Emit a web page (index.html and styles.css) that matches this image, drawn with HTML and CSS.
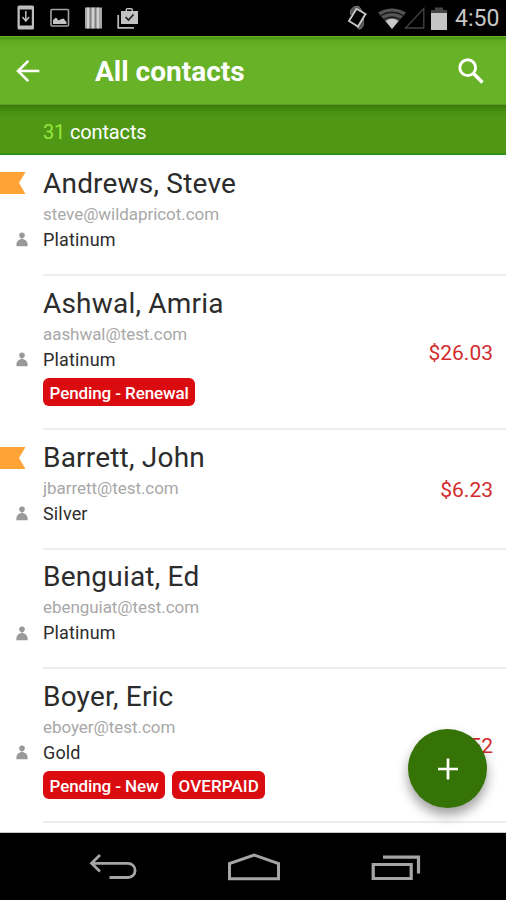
FILE: index.html
```html
<!DOCTYPE html>
<html lang="en">
<head>
<meta charset="utf-8">
<title>All contacts</title>
<link rel="stylesheet" href="styles.css">
</head>
<body>
<svg class="defs" aria-hidden="true">
  <symbol id="member" viewBox="0 0 12 15"><circle cx="6" cy="3.200" r="2.800"/><path d="M.4 14.200v-2.200Q1 8.500 4.200 7.600L5.300 6.500h1.400l1.100 1.100Q11 8.500 11.600 12v2.200z"/></symbol>
  <symbol id="flag" viewBox="0 0 26 22"><path d="M0 0h25.500l-6.500 11 6.500 11H0z"/></symbol>
</svg>
<div class="screen">
  <header class="status">
    <div class="notices">
      <svg width="18" height="26" viewBox="0 0 18 26"><path fill="#bdbdbd" fill-rule="evenodd" d="M2 0.500h13.500a1.500 1.500 0 0 1 1.500 1.500v21a1.500 1.500 0 0 1-1.500 1.500H2A1.500 1.500 0 0 1 .5 23V2A1.500 1.500 0 0 1 2 .5zM2.800 4.500v16h12v-16z"/><path d="M8.800 6v9M5.500 12l3.300 4 3.300-4" fill="none" stroke="#bdbdbd" stroke-width="1.500"/></svg>
      <svg width="20" height="20" viewBox="0 0 20 20"><rect x="1" y="1.500" width="17.500" height="16.500" rx="1" fill="none" stroke="#a2a2a2" stroke-width="1.600"/><path fill="#c4c4c4" d="M3 16v-4l3-2.500 2.500 3 3-1.500 2-.5 3 3.500v2z"/></svg>
      <svg width="17" height="22" viewBox="0 0 17 22"><path fill="#a6a6a6" d="M0 .5h17v21H0z"/><path d="M3 .5v21M8 .5v21M13 .5v21" stroke="#d0d0d0" stroke-width="2"/><path d="M5.500.5v21M10.500.5v21" stroke="#777" stroke-width=".8"/></svg>
      <svg width="22" height="21" viewBox="0 0 22 21"><path d="M1.200 7v12.800H17" fill="none" stroke="#b5b5b5" stroke-width="1.800"/><path fill="#c2c2c2" fill-rule="evenodd" d="M4 3h4.500V2A2 2 0 0 1 10.500 0h3.500a2 2 0 0 1 2 2v1h5v13H4zM10 3h4.500V1.500H10z"/><path d="M8.500 9l3 3 5-5.500" fill="none" stroke="#222" stroke-width="1.700"/></svg>
    </div>
    <div class="signals">
      <svg class="rotate" width="22" height="26" viewBox="0 0 22 26"><path d="M4.500 10C4 4 7 .5 13 1.500L16 6M17.500 14c.5 7-1 10-5 10l-3-4" fill="#555" stroke="#777" stroke-width="1"/><path d="M10.500 3.800l9 5.200-7.500 12.500-9-5.500z" fill="#000" stroke="#c8c8c8" stroke-width="1.900"/></svg>
      <svg class="wifi" width="28" height="21" viewBox="0 0 28 21"><path fill="#555" d="M0 4.500Q14-3.500 28 4.500L14 21z"/><path d="M3 7.500q11-6.500 22 0M6 11.500q8-5 16 0" fill="none" stroke="#161616" stroke-width="1.300"/><path fill="#c8c8c8" d="M7.500 13q6.500-4.500 13 0L14 21z"/></svg>
      <svg class="cell" width="21" height="22" viewBox="0 0 21 22"><path d="M1.500 21H19.800V1.500z" fill="none" stroke="#444" stroke-width="1.300"/></svg>
      <svg class="battery" width="16" height="23" viewBox="0 0 16 23"><path fill="#454545" d="M4 .5h8V3h4v4H0V3h4z"/><path fill="#c4c4c4" d="M0 6h16v17H0z"/></svg>
      <span class="clock">4:50</span>
    </div>
  </header>
  <nav class="appbar">
    <svg class="back" width="24" height="24" viewBox="0 0 24 24"><path d="M23.300 12H2M12.300 1.800L2 12l10.300 10.200" fill="none" stroke="#fff" stroke-width="2.600"/></svg>
    <h1 class="title">All contacts</h1>
    <svg class="search" width="26" height="26" viewBox="0 0 26 26"><circle cx="9.700" cy="9.700" r="7.900" fill="none" stroke="#fff" stroke-width="2.900"/><path d="M15.500 15.500l9 9" stroke="#fff" stroke-width="3.500"/></svg>
  </nav>
  <div class="count"><span class="number">31</span>&nbsp;contacts</div>
  <main class="list">
    <article class="row first">
      <div class="marks"><svg class="flag"><use href="#flag"/></svg><svg class="member"><use href="#member"/></svg></div>
      <div class="body"><div class="info"><h2 class="name">Andrews, Steve</h2><p class="email">steve@wildapricot.com</p><p class="level">Platinum</p></div></div>
    </article>
    <article class="row tall">
      <div class="marks"><svg class="member"><use href="#member"/></svg></div>
      <div class="body"><div class="info"><h2 class="name">Ashwal, Amria</h2><p class="email">aashwal@test.com</p><p class="level">Platinum</p><div class="tags"><span class="tag">Pending - Renewal</span></div></div><span class="price">$26.03</span></div>
    </article>
    <article class="row">
      <div class="marks"><svg class="flag"><use href="#flag"/></svg><svg class="member"><use href="#member"/></svg></div>
      <div class="body"><div class="info"><h2 class="name">Barrett, John</h2><p class="email">jbarrett@test.com</p><p class="level">Silver</p></div><span class="price">$6.23</span></div>
    </article>
    <article class="row">
      <div class="marks"><svg class="member"><use href="#member"/></svg></div>
      <div class="body"><div class="info"><h2 class="name">Benguiat, Ed</h2><p class="email">ebenguiat@test.com</p><p class="level">Platinum</p></div></div>
    </article>
    <article class="row tall">
      <div class="marks"><svg class="member"><use href="#member"/></svg></div>
      <div class="body"><div class="info"><h2 class="name">Boyer, Eric</h2><p class="email">eboyer@test.com</p><p class="level">Gold</p><div class="tags"><span class="tag">Pending - New</span><span class="tag caps">OVERPAID</span></div></div><span class="price">$6.52</span></div>
    </article>
  </main>
  <button class="fab" aria-label="Add contact"><svg width="20" height="22" viewBox="0 0 20 22"><path d="M10 .5v21M0 11h20" stroke="#fff" stroke-width="2.700"/></svg></button>
  <footer class="navbar">
    <svg width="50" height="30" viewBox="0 0 50 30"><path d="M12 2L3.500 10.300 12 18.500M3.500 10.300H40a7 7 0 0 1 0 14.200H21.500" fill="none" stroke="#a5a5a5" stroke-width="2.800"/></svg>
    <svg width="54" height="30" viewBox="0 0 54 30"><path d="M1.500 25.800V10.500L26 2 50.500 10.500v15.300z" fill="none" stroke="#a5a5a5" stroke-width="3"/></svg>
    <svg width="50" height="30" viewBox="0 0 50 30"><path d="M2.200 11.500h38v14h-38zM12 4.200h35.500V20.500" fill="none" stroke="#a5a5a5" stroke-width="3.200"/></svg>
  </footer>
</div>
</body>
</html>
```

FILE: styles.css
```css
* { box-sizing: border-box; }
body { margin: 0; background: #fff; font-family: Roboto, "Liberation Sans", sans-serif; }
h1, h2, p { margin: 0; font-weight: 400; }
svg { display: block; flex: none; }
.defs { position: absolute; width: 0; height: 0; }
.screen { position: relative; display: flex; flex-direction: column; width: 506px; height: 900px; overflow: hidden; }

.status { height: 36px; flex: none; background: #000; display: flex; justify-content: space-between; align-items: center; padding: 0 7px 0 17px; }
.notices { display: flex; align-items: center; gap: 15px; }
.signals { display: flex; align-items: center; }
.wifi { margin-left: 10px; }
.cell { margin-left: -2px; }
.battery { margin-left: 6px; }
.clock { margin-left: 8px; width: 44px; font-size: 23px; line-height: 36px; padding-top: 1px; color: #c6c6c6; white-space: nowrap; }

.appbar { height: 69px; flex: none; display: flex; align-items: center; padding: 1px 22px 0 16px; background: linear-gradient(#68b22a 0 1px, #509a17 1px 3px, #5eaa20 4px, #68b228 14px); border-bottom: 1px solid #5b9e25; }
.title { flex: 1; margin-left: 55px; padding-top: 2px; color: #fff; font-size: 28px; font-weight: 700; line-height: 40px; }

.count { height: 50px; flex: none; padding-left: 43px; background: linear-gradient(#3a760d, #479010 6px, #4f9714 12px, #4f9714 48px, #239018 49px); color: #fff; font-size: 20px; line-height: 54px; letter-spacing: -.15px; }
.number { color: #93e83c; }

.list { height: 678px; flex: none; background: #fff; border-bottom: 1px solid #c8c8c8; overflow: hidden; }
.row { display: grid; grid-template-columns: 43px 1fr; height: 119.400px; }
.row.first { height: 121px; }
.row.tall { height: 154.300px; }
.marks { display: grid; grid-template-rows: 50px 41px; align-content: start; }
.flag { width: 26px; height: 22px; margin-top: 17px; fill: #ffa336; }
.member { grid-row: 2; width: 12px; height: 15px; margin: 26px 0 0 15.500px; fill: #999; }
.body { display: flex; align-items: center; justify-content: space-between; padding-right: 13px; border-bottom: 2px solid #ededed; }
.info { align-self: start; padding-top: 10.500px; }
.first .info { padding-top: 12px; }
.first .member { margin-top: 27px; }
.name { font-size: 28px; line-height: 34px; color: #2c2c2c; letter-spacing: .2px; white-space: nowrap; }
.email { font-size: 17px; line-height: 26px; color: #a8a8a8; letter-spacing: -.05px; white-space: nowrap; }
.level { font-size: 18px; line-height: 26px; color: #2c2c2c; letter-spacing: .15px; }
.tags { display: flex; gap: 7px; margin-top: 5px; }
.tag { height: 28px; padding: 0 6.500px; border-radius: 6px; background: #db0c10; color: #fff; font-size: 17px; line-height: 30px; font-weight: 500; letter-spacing: -.1px; }
.caps { letter-spacing: .1px; }
.price { padding-top: 2px; font-size: 21px; color: #d22c2e; }

.fab { position: absolute; left: 408px; top: 729px; width: 79px; height: 79px; border: 0; border-radius: 50%; padding: 0; background: #367306; display: grid; place-items: center; box-shadow: 0 7px 12px rgba(0,0,0,.38); }
.navbar { flex: 1; background: #000; display: flex; justify-content: space-between; align-items: center; padding: 3px 85px 0 88px; }
```
